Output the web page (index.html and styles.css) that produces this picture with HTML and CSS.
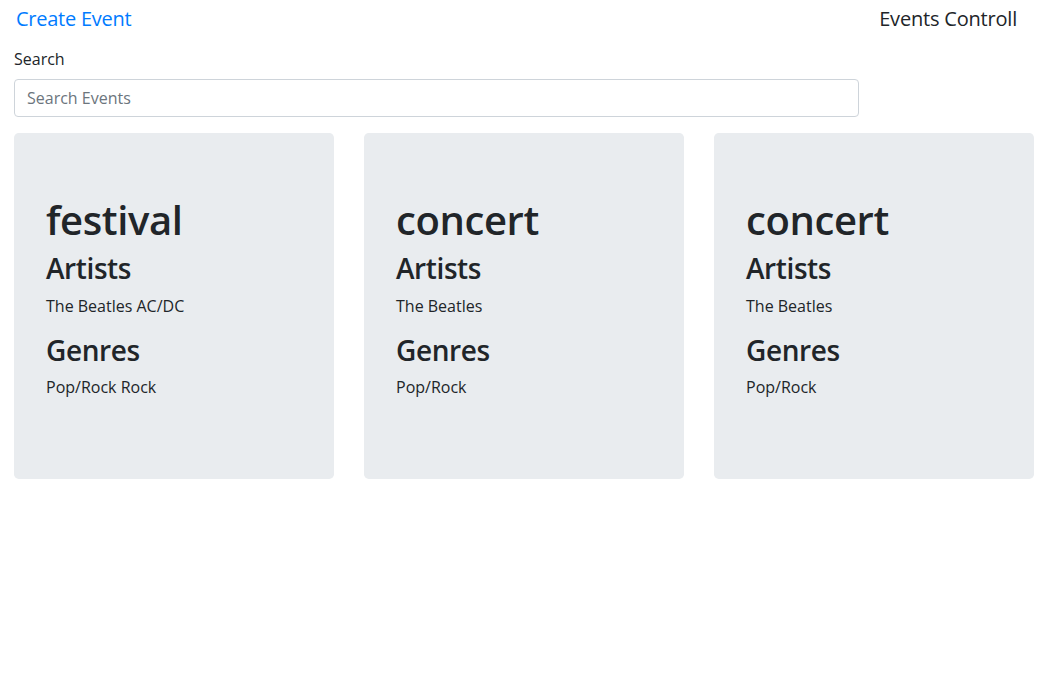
FILE: index.html
```html
<!DOCTYPE html>
<html lang="en">
<head>
<meta charset="utf-8">
<title>Events Controll</title>
<link rel="stylesheet" href="styles.css">
</head>
<body>
<header class="topbar">
  <a class="brand-link" href="#">Create Event</a>
  <span class="brand-title">Events Controll</span>
</header>
<main class="page">
  <div class="search-group">
    <label class="search-label" for="search">Search</label>
    <input class="search-input" id="search" type="text" placeholder="Search Events">
  </div>
  <section class="event-grid">
    <article class="event-card">
      <h1 class="event-type">festival</h1>
      <h3 class="event-heading">Artists</h3>
      <p class="event-text">The Beatles AC/DC</p>
      <h3 class="event-heading">Genres</h3>
      <p class="event-text">Pop/Rock Rock</p>
    </article>
    <article class="event-card">
      <h1 class="event-type">concert</h1>
      <h3 class="event-heading">Artists</h3>
      <p class="event-text">The Beatles</p>
      <h3 class="event-heading">Genres</h3>
      <p class="event-text">Pop/Rock</p>
    </article>
    <article class="event-card">
      <h1 class="event-type">concert</h1>
      <h3 class="event-heading">Artists</h3>
      <p class="event-text">The Beatles</p>
      <h3 class="event-heading">Genres</h3>
      <p class="event-text">Pop/Rock</p>
    </article>
  </section>
</main>
</body>
</html>
```
FILE: styles.css
```css
* { box-sizing: border-box; }

body {
  margin: 0;
  font-family: "Open Sans", "Noto Sans", sans-serif;
  font-size: 16px;
  line-height: 1.5;
  color: #212529;
  background: #fff;
}

.topbar {
  display: flex;
  justify-content: space-between;
  align-items: flex-start;
  padding: 4px 38px 0 16px;
  font-size: 20px;
  line-height: 30px;
}

.brand-link {
  color: #007bff;
  text-decoration: none;
  letter-spacing: -0.25px;
}

.brand-title {
  color: #212529;
  letter-spacing: -0.2px;
}

.page {
  padding: 13px 0 0 14px;
}

.search-group {
  width: 845px;
  margin-bottom: 16px;
}

.search-label {
  display: block;
  margin-bottom: 8px;
}

.search-input {
  display: block;
  width: 100%;
  height: 38px;
  padding: 6px 12px;
  font-family: inherit;
  font-size: 16px;
  line-height: 1.5;
  color: #495057;
  background: #fff;
  border: 1px solid #ced4da;
  border-radius: 4px;
  outline: none;
}

.search-input::placeholder {
  color: #6c757d;
  opacity: 1;
}

.event-grid {
  display: grid;
  grid-template-columns: repeat(3, 320px);
  column-gap: 30px;
}

.event-card {
  background: #e9ecef;
  border-radius: 4.8px;
  padding: 63px 32px 64px;
}

.event-type {
  margin: 0 0 8px;
  font-size: 40px;
  line-height: 1.2;
  font-weight: 600;
  letter-spacing: -0.4px;
}

.event-heading {
  margin: 0 0 8px;
  font-size: 28px;
  line-height: 1.2;
  font-weight: 600;
  letter-spacing: -0.4px;
}

.event-text {
  margin: 0 0 16px;
  font-size: 16px;
  line-height: 24px;
}
```
